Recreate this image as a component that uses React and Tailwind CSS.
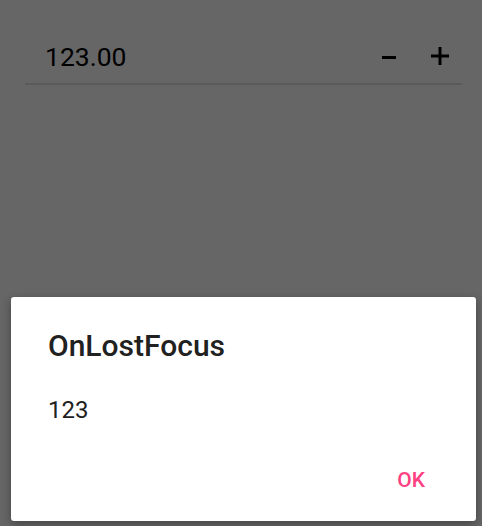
export default function App() {
  const font = { fontFamily: "Roboto, 'Noto Sans', sans-serif" };
  return (
    <div className="relative w-[482px] h-[526px] bg-[#666666] overflow-hidden" style={font}>
      <div className="pt-[41px] pl-[25px] pr-[20px]">
        <div className="flex items-center border-b-2 border-[#5a5a5a] pb-[10px]">
          <div className="pl-[20px] flex-1 text-[26.5px] leading-[32px] text-black">123.00</div>
          <svg width="14" height="3" viewBox="0 0 14 3" className="mr-[35px]">
            <rect x="0" y="0" width="14" height="3" fill="#000" />
          </svg>
          <svg width="18" height="18" viewBox="0 0 18 18" className="mr-[13px] mb-[3px]">
            <rect x="0" y="7.5" width="18" height="3" fill="#000" />
            <rect x="7.5" y="0" width="3" height="18" fill="#000" />
          </svg>
        </div>
      </div>

      <div className="absolute left-[11px] top-[297px] w-[465px] h-[224px] rounded-[3px] bg-white shadow-[0_3px_10px_rgba(0,0,0,0.35)] flex flex-col">
        <div className="pt-[31px] pl-[37px] text-[30px] leading-[36px] font-medium text-[#212121]">OnLostFocus</div>
        <div className="pt-[32px] pl-[37px] text-[24px] leading-[28px] text-[#212121]">123</div>
        <div className="mt-[44px] flex justify-end pr-[51px]">
          <span className="text-[21px] leading-[24px] font-medium text-[#ff4081]">OK</span>
        </div>
      </div>
    </div>
  );
}
